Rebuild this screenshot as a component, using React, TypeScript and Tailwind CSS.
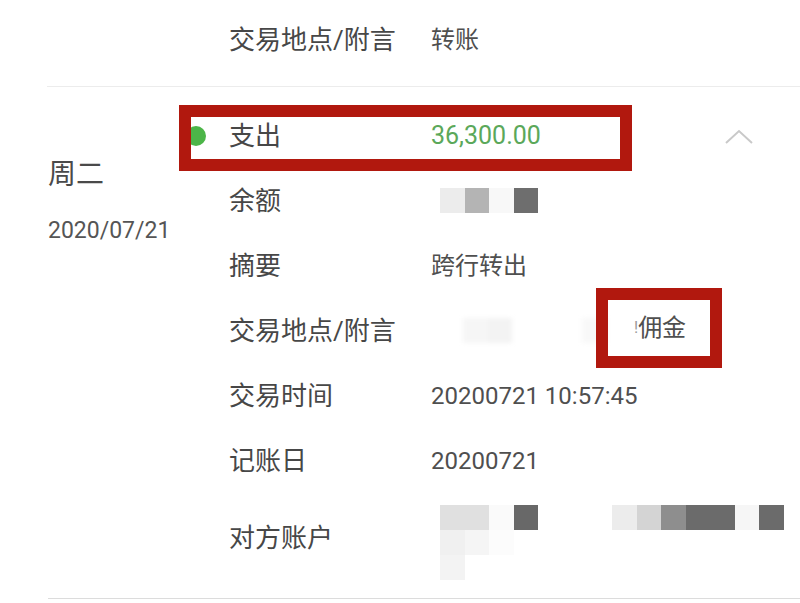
import React from 'react';

// Mosaic cell colours (blurred account data)
type Cell = string | null;

const Mosaic: React.FC<{ rows: Cell[][]; className?: string }> = ({ rows, className }) => (
  <div className={`flex flex-col ${className ?? ''}`}>
    {rows.map((row, i) => (
      <div key={i} className="flex">
        {row.map((c, j) => (
          <div
            key={j}
            className="h-[25px] w-[24.5px] shrink-0"
            style={{ backgroundColor: c ?? 'transparent' }}
          />
        ))}
      </div>
    ))}
  </div>
);

const Row: React.FC<{
  label: string;
  children?: React.ReactNode;
  className?: string;
}> = ({ label, children, className }) => (
  <div className={`relative flex items-center h-[65px] ${className ?? ''}`}>
    <div className="w-[202px] shrink-0 text-[26px] text-[#474747] leading-[36px]">{label}</div>
    <div className="flex-1 flex items-center text-[24px] text-[#4f4f4f] leading-[36px]">{children}</div>
  </div>
);

const App: React.FC = () => {
  return (
    <div
      className="w-[800px] h-[603px] overflow-hidden bg-white"
      style={{ fontFamily: "Roboto, 'Noto Sans CJK SC', sans-serif" }}
    >
      {/* previous record tail */}
      <div className="h-[87px] ml-[47px] border-b border-[#ececec]">
        <div className="flex pt-[22px] pl-[182px] leading-[36px]">
          <div className="w-[202px] text-[26px] text-[#474747]">交易地点/附言</div>
          <div className="text-[24px] text-[#4f4f4f]">转账</div>
        </div>
      </div>

      {/* expanded record */}
      <div className="flex ml-[48px] border-b border-[#dcdcdc] h-[512px]">
        <div className="w-[181px] shrink-0 pt-[70px]">
          <div className="text-[28px] leading-[36px] text-[#4a4a4a]">周二</div>
          <div className="mt-[22px] text-[23px] leading-[32px] text-[#555]">2020/07/21</div>
        </div>

        <div className="flex-1 pt-[17px]">
          {/* 支出 row with annotation */}
          <div className="relative flex items-center h-[64px]">
            <div className="absolute left-[-43px] top-[22px] w-[20px] h-[20px] rounded-full bg-[#4cb548]" />
            <div className="absolute left-[-50px] top-[1px] w-[453px] h-[66px] border-[12px] border-[#b1180e]" />
            <div className="w-[202px] shrink-0 text-[26px] text-[#474747] leading-[36px]">支出</div>
            <div className="text-[25px] text-[#5ba85a] leading-[36px]">36,300.00</div>
            <svg className="ml-auto mr-[47px]" width="28" height="15" viewBox="0 0 28 15" fill="none">
              <path d="M1 14 L14 2 L27 14" stroke="#c9c9c9" strokeWidth="2" />
            </svg>
          </div>

          <Row label="余额">
            <Mosaic className="ml-[9px] blur-[0.6px]" rows={[['#ececec', '#b4b4b4', '#f8f8f8', '#6e6e6e']]} />
          </Row>

          <Row label="摘要">跨行转出</Row>

          <Row label="交易地点/附言">
            <Mosaic className="ml-[32px] blur-[2px]" rows={[['#f6f6f6', '#f3f3f3']]} />
            <Mosaic className="ml-[70px] blur-[2px]" rows={[['#f8f8f8']]} />
            <div className="absolute left-[367px] top-[-10px] w-[126px] h-[80px] border-[12px] border-[#b1180e] flex items-center">
              <span className="ml-[26px] text-[16px] text-[#9a9a9a] leading-none">!</span>
              <span className="text-[24px] text-[#4f4f4f] leading-[36px]">佣金</span>
            </div>
          </Row>

          <Row label="交易时间">20200721 10:57:45</Row>

          <Row label="记账日">20200721</Row>

          <div className="relative flex items-start h-[90px]">
            <div className="w-[202px] shrink-0 mt-[27px] text-[26px] text-[#474747] leading-[36px]">对方账户</div>
            <div className="flex items-start mt-[12px]">
              <Mosaic
                className="ml-[9px] blur-[0.6px]"
                rows={[
                  ['#e0e0e0', '#e0e0e0', '#fafafa', '#686868'],
                  ['#f0f0f0', '#f5f5f5', '#fcfcfc', null],
                  ['#f3f3f3', null, null, null],
                ]}
              />
              <Mosaic
                className="ml-[74px] blur-[0.6px]"
                rows={[['#ececec', '#d4d4d4', '#8e8e8e', '#6b6b6b', '#6b6b6b', '#f6f6f6', '#6b6b6b']]}
              />
            </div>
          </div>
        </div>
      </div>
    </div>
  );
};

export default App;
